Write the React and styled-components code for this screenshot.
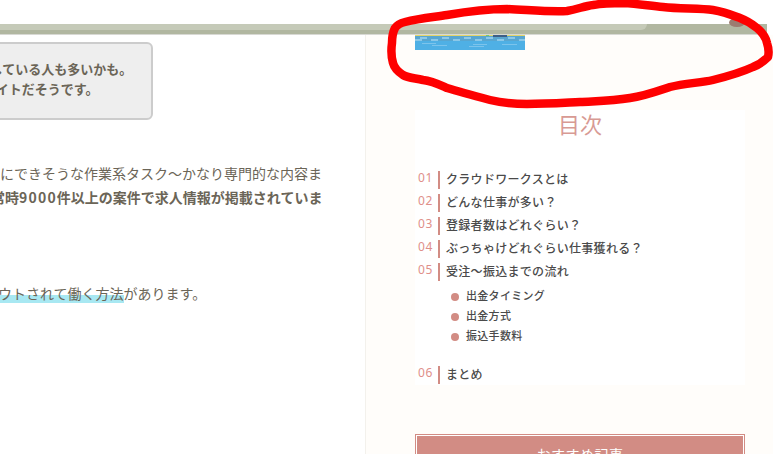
import { createGlobalStyle, styled } from "styled-components";

const GlobalStyle = createGlobalStyle`
    html, body {
        margin: 0;
        padding: 0;
        height: 100%;
        overflow: hidden;
        background: #fff;
        font-family: "Noto Sans CJK JP", "Noto Sans", sans-serif;
    }
`;

const Page = styled.div`
    position: relative;
    width: 773px;
    height: 454px;
    overflow: hidden;
    padding-top: 24px;
    box-sizing: border-box;
`;

const HeaderBar = styled.div`
    position: relative;
    width: 767px;
    height: 10px;
    background: #b1b7a1;
    border-bottom: 1px solid #d8d9d4;
`;

const HeaderLight = styled.div`
    width: 647px;
    height: 6px;
    background: #c5cab8;
    border-bottom-right-radius: 8px;
`;

const HeaderDot = styled.div`
    position: absolute;
    left: 729px;
    top: -6px;
    width: 16px;
    height: 9px;
    border-radius: 50%;
    background: #9c7c70;
`;

const Columns = styled.div`
    display: flex;
    height: 419px;
`;

const Main = styled.main`
    width: 365px;
    flex: none;
    overflow: hidden;
    color: #6b6557;
`;

const Callout = styled.div`
    width: 192px;
    height: 78px;
    margin: 7px 0 0 -39px;
    padding: 15px 0 0 0;
    box-sizing: border-box;
    background: #eee;
    border: 2px solid #ccc;
    border-radius: 6px;
    font-size: 13px;
    font-weight: 700;
    line-height: 20px;
    white-space: nowrap;
    overflow: hidden;
`;

const CalloutLine = styled.div`
    margin-left: ${(props) => props.$indent}px;
`;

const Para = styled.p`
    margin: ${(props) => props.$top}px 0 0 ${(props) => props.$left}px;
    font-size: 14px;
    line-height: 24px;
    height: 24px;
    font-weight: ${(props) => (props.$bold ? 700 : 400)};
    white-space: nowrap;
`;

const Digits = styled.span`
    letter-spacing: 1.2px;
`;

const Marker = styled.span`
    background: linear-gradient(transparent 62%, #a8e8f2 62%);
`;

const Sidebar = styled.aside`
    flex: 1;
    background: #fffdfa;
    border-left: 1px solid #f3f1ec;
    padding-left: 49px;
`;

const Banner = styled.svg`
    display: block;
    width: 110px;
    height: 15px;
`;

const Toc = styled.nav`
    width: 330px;
    height: 275px;
    margin-top: 60px;
    background: #fff;
`;

const TocTitle = styled.div`
    text-align: center;
    color: #d89a94;
    font-size: 22px;
    line-height: 26px;
    height: 61px;
`;

const TocRow = styled.div`
    display: flex;
    align-items: flex-start;
    height: 18px;
    margin-bottom: 5px;
    margin-top: ${(props) => props.$top ?? 0}px;
`;

const TocNum = styled.span`
    width: 23px;
    padding-left: 3px;
    box-sizing: border-box;
    color: #e08f8a;
    font-family: "Noto Sans", sans-serif;
    font-size: 12px;
    letter-spacing: 0.6px;
    line-height: 14px;
`;

const TocText = styled.span`
    border-left: 2px solid #d28c84;
    padding-left: 6px;
    height: 18px;
    line-height: 15px;
    font-size: 12px;
    letter-spacing: 0.3px;
    font-weight: 500;
    color: #4a4a4a;
    white-space: nowrap;
`;

const SubList = styled.ul`
    list-style: none;
    margin: -1px 0 0;
    padding: 0 0 0 36px;
`;

const SubItem = styled.li`
    display: flex;
    align-items: center;
    gap: 7px;
    height: 20px;
    font-size: 11px;
    letter-spacing: 0.3px;
    font-weight: 500;
    color: #4a4a4a;
    &::before {
        content: "";
        width: 8px;
        height: 8px;
        margin-top: 3px;
        border-radius: 50%;
        background: #d28c84;
    }
`;

const Recommend = styled.div`
    width: 328px;
    height: 40px;
    margin: 50px 0 0 1px;
    box-sizing: border-box;
    background: #d28c84;
    border: 1px solid #fff;
    outline: 1px solid #d28c84;
    color: #fff;
    font-size: 14px;
    text-align: center;
    line-height: 36px;
    letter-spacing: 0.5px;
`;

const Scribble = styled.svg`
    position: absolute;
    left: 0;
    top: 0;
    pointer-events: none;
`;

const tocItems = [
    ["01", "クラウドワークスとは"],
    ["02", "どんな仕事が多い？"],
    ["03", "登録者数はどれぐらい？"],
    ["04", "ぶっちゃけどれぐらい仕事獲れる？"],
    ["05", "受注～振込までの流れ"],
];

const subItems = ["出金タイミング", "出金方式", "振込手数料"];

const brickRows = [
    { y: 2, xs: [5, 27, 49, 71, 93] },
    { y: 4, xs: [0, 16, 38, 60, 82, 104] },
];

const scribblePath =
    "M405 22 C420 18 435 17 447 15 C470 11 490 9 507 9 C530 10 550 12 567 11 C578 9 585 6 593 5 C605 3 615 3 623 3 C640 4 650 6 663 7 C680 9 700 8 713 10 C725 12 732 15 740 18 C748 21 752 24 757 28 C763 33 766 38 767 43 C769 49 769 53 768 57 C763 62 758 65 753 67 C740 73 725 77 713 80 C700 83 685 83 670 87 C655 92 645 96 630 98 C612 101 597 101 580 102 C560 103 545 104 527 104 C512 104 502 103 490 100 C475 96 460 92 447 88 C438 84 432 81 423 80 C414 78 408 78 403 75 C397 71 394 67 393 63 C391 56 391 50 392 43 C392 36 393 32 395 28 C397 25 401 23 405 22 Z";

const App = () => {
    return (
        <Page>
            <GlobalStyle />
            <HeaderBar>
                <HeaderLight />
                <HeaderDot />
            </HeaderBar>
            <Columns>
                <Main>
                    <Callout>
                        <CalloutLine $indent={-25}>もう登録している人も多いかも。</CalloutLine>
                        <CalloutLine $indent={-97}>クラウドソーシングサイトだそうです。</CalloutLine>
                    </Callout>
                    <Para $top={41} $left={0}>にできそうな作業系タスク～かなり専門的な内容ま</Para>
                    <Para $top={0} $left={-9} $bold>
                        常時<Digits>9000</Digits>件以上の案件で求人情報が掲載されていま
                    </Para>
                    <Para $top={72} $left={-2}>
                        <Marker>ウトされて働く方法</Marker>があります。
                    </Para>
                </Main>
                <Sidebar>
                    <Banner viewBox="0 0 110 15">
                        <rect width="110" height="15" fill="#4fb0e5" />
                        <rect y="1" width="110" height="5" fill="#5aa6cf" />
                        <rect width="110" height="1" fill="#e3d56a" />
                        <rect x="78" y="0" width="14" height="2" fill="#3f5f86" />
                        <rect x="71" y="0" width="3" height="1" fill="#7cc46a" />
                        {brickRows.map((row) => (
                            <g key={row.y} fill="#8cc8e8">
                                {row.xs.map((x) => (
                                    <rect key={x} x={x} y={row.y} width="7" height="2" />
                                ))}
                            </g>
                        ))}
                        <g fill="#7cc4ec">
                            <rect x="7" y="8" width="14" height="1" />
                            <rect x="58" y="9" width="14" height="1" />
                            <rect x="87" y="9" width="15" height="1" />
                            <rect x="54" y="11" width="15" height="1" />
                            <rect x="17" y="10" width="15" height="1" />
                        </g>
                    </Banner>
                    <Toc>
                        <TocTitle>目次</TocTitle>
                        {tocItems.map(([num, label]) => (
                            <TocRow key={num}>
                                <TocNum>{num}</TocNum>
                                <TocText>{label}</TocText>
                            </TocRow>
                        ))}
                        <SubList>
                            {subItems.map((label) => (
                                <SubItem key={label}>{label}</SubItem>
                            ))}
                        </SubList>
                        <TocRow $top={21}>
                            <TocNum>06</TocNum>
                            <TocText>まとめ</TocText>
                        </TocRow>
                    </Toc>
                    <Recommend>おすすめ記事</Recommend>
                </Sidebar>
            </Columns>
            <Scribble width="773" height="454" viewBox="0 0 773 454">
                <path d={scribblePath} fill="none" stroke="#fe0000" strokeWidth="8.5" strokeLinejoin="round" />
            </Scribble>
        </Page>
    );
};

export default App;
